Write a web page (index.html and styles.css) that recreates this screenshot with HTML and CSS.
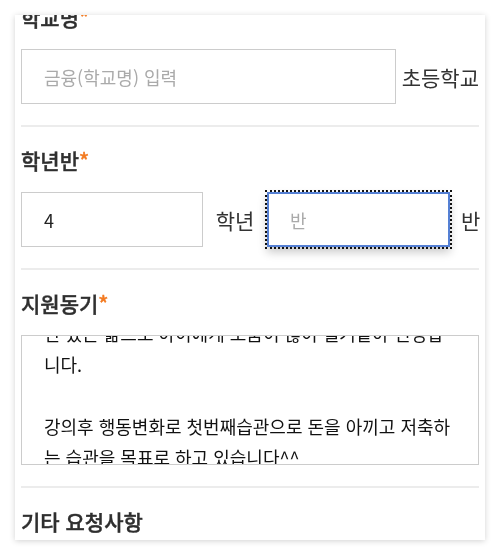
FILE: index.html
```html
<!DOCTYPE html>
<html lang="ko">
<head>
<meta charset="utf-8">
<title>신청서</title>
<link rel="stylesheet" href="styles.css">
</head>
<body>
<div class="card" id="card">
  <section class="field">
    <div class="label">학교명<span class="req">*</span></div>
    <div class="row">
      <input class="box" type="text" placeholder="금융(학교명) 입력">
      <span class="unit">초등학교</span>
    </div>
  </section>
  <section class="field">
    <div class="label">학년반<span class="req">*</span></div>
    <div class="grade">
      <input class="box" type="text" value="4">
      <span class="unit mid">학년</span>
      <input class="box focus" type="text" placeholder="반">
      <span class="unit end">반</span>
    </div>
  </section>
  <section class="field">
    <div class="label">지원동기<span class="req">*</span></div>
    <textarea class="memo" id="memo">아이경제교육에 관심은 많았지만 막연하게 머리로 알고만 있는 앎으로 아이에게 도움이 많이 될거같아 신청합니다.

강의후 행동변화로 첫번째습관으로 돈을 아끼고 저축하는 습관을 목표로 하고 있습니다^^</textarea>
  </section>
  <section class="field">
    <div class="label">기타 요청사항</div>
    <textarea class="memo"></textarea>
  </section>
</div>
<script src="script.js"></script>
</body>
</html>
```
FILE: styles.css
```css
html, body {
  margin: 0;
  padding: 0;
  background: #ffffff;
}
body {
  font-family: "Noto Sans CJK KR", "Noto Sans", sans-serif;
  color: #333;
}
.card {
  margin: 15px;
  width: 470px;
  height: 525px;
  box-sizing: border-box;
  padding: 0 6px;
  overflow: hidden;
  background: #fff;
  box-shadow: 0 1px 6px rgba(0, 0, 0, 0.18);
}
.field {
  padding: 19px 0 21px;
  border-bottom: 2px solid #ececec;
}
.label {
  font-size: 21px;
  line-height: 28px;
  font-weight: 500;
  color: #2f2f2f;
  -webkit-text-stroke: 0.4px #2f2f2f;
  margin-bottom: 18px;
}
.req {
  color: #f37b22;
  -webkit-text-stroke: 0.4px #f37b22;
}
.row {
  display: flex;
  align-items: center;
  gap: 6px;
}
.row .box {
  flex: 1;
}
.grade {
  display: grid;
  grid-template-columns: 182px 64px 183px 1fr;
  align-items: center;
}
.box {
  box-sizing: border-box;
  width: 100%;
  height: 55px;
  border: 1px solid #cccccc;
  border-radius: 0;
  padding: 0 0 0 22px;
  font-family: "Noto Sans CJK KR", "Noto Sans", sans-serif;
  font-size: 18px;
  color: #222;
  background: #fff;
  outline: none;
  min-width: 0;
}
.box::placeholder {
  color: #aaaaaa;
}
.focus {
  border: 2px solid #5580d4;
  padding-left: 21px;
  outline: 2px dotted #111;
  outline-offset: 0;
  box-shadow: 0 5px 9px rgba(0, 0, 0, 0.22);
}
.unit {
  font-size: 21px;
  color: #333;
  white-space: nowrap;
}
.mid {
  justify-self: center;
}
.end {
  padding-left: 11px;
}
.memo {
  display: block;
  box-sizing: border-box;
  width: 100%;
  height: 130px;
  margin: 0;
  border: 1px solid #cccccc;
  border-radius: 0;
  padding: 10px 24px 10px 22px;
  font-family: "Noto Sans CJK KR", "Noto Sans", sans-serif;
  font-size: 18px;
  line-height: 31px;
  color: #111;
  resize: none;
  outline: none;
  overflow: auto;
  scrollbar-width: none;
}
.memo::-webkit-scrollbar {
  display: none;
}
```
FILE: script.js
```js
document.getElementById('card').scrollTop = 31;
document.getElementById('memo').scrollTop = 59;
```
